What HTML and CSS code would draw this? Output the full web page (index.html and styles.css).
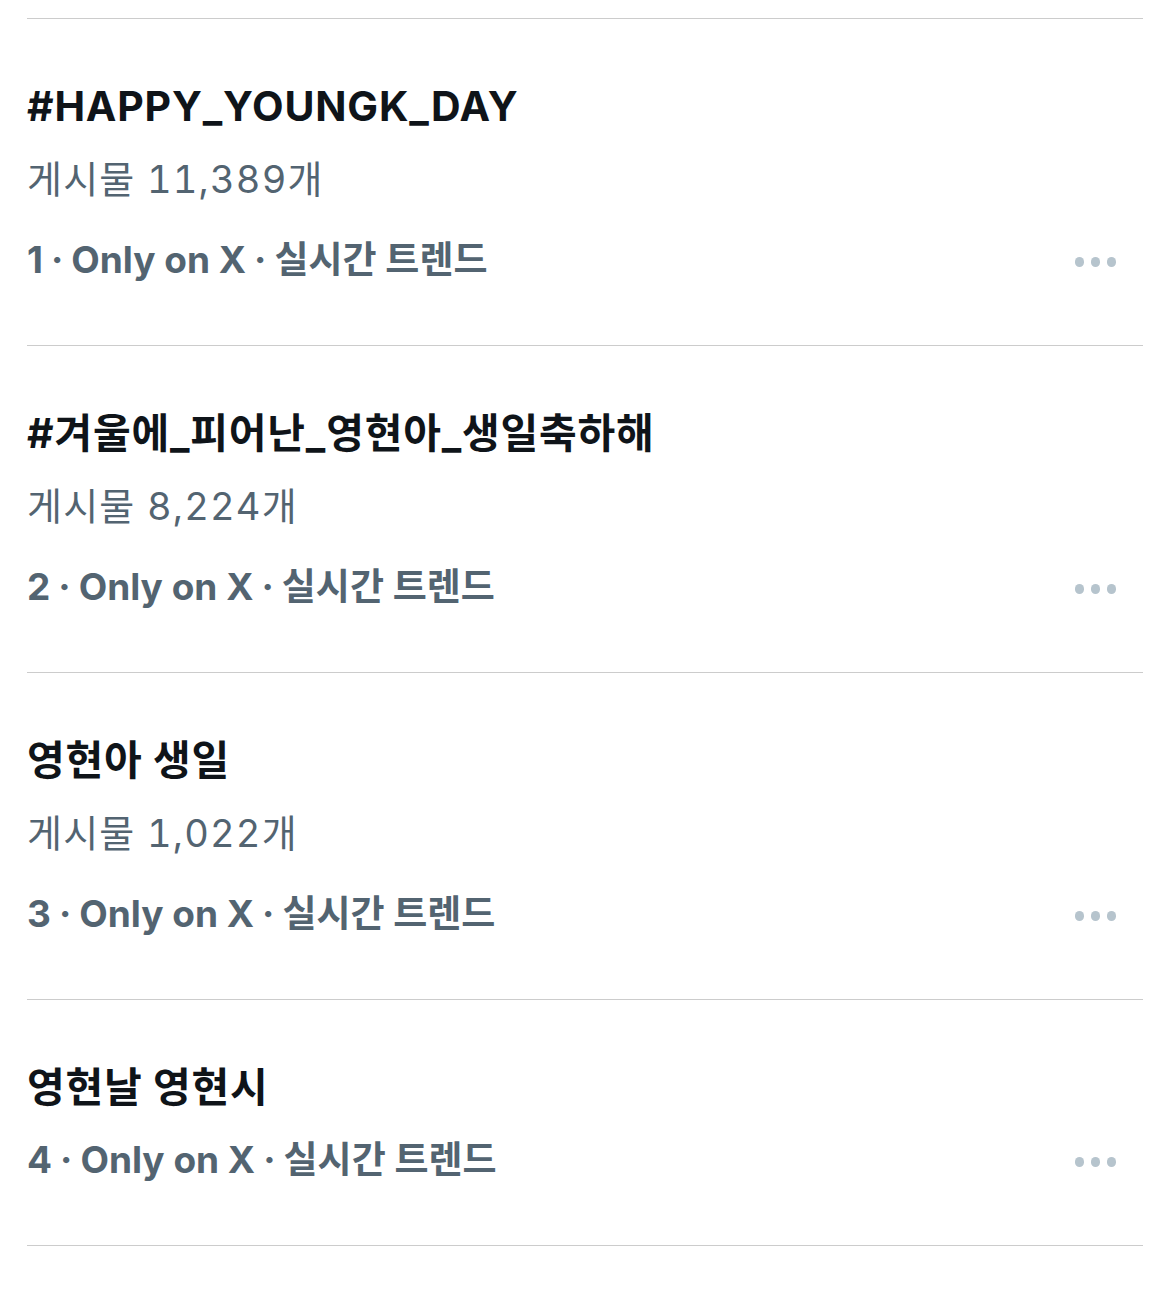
FILE: index.html
```html
<!DOCTYPE html>
<html lang="ko">
<head>
<meta charset="utf-8">
<link rel="stylesheet" href="styles.css">
</head>
<body>
<div class="list">
  <div class="trend">
    <div class="info">
      <div class="title">#HAPPY_YOUNGK_DAY</div>
      <div class="count">게시물 11,389개</div>
      <div class="meta">1<span class="sep">·</span>Only on X<span class="sep">·</span>실시간 트렌드</div>
    </div>
    <div class="more"><span></span><span></span><span></span></div>
  </div>
  <div class="trend">
    <div class="info">
      <div class="title">#겨울에_피어난_영현아_생일축하해</div>
      <div class="count">게시물 8,224개</div>
      <div class="meta">2<span class="sep">·</span>Only on X<span class="sep">·</span>실시간 트렌드</div>
    </div>
    <div class="more"><span></span><span></span><span></span></div>
  </div>
  <div class="trend">
    <div class="info">
      <div class="title">영현아 생일</div>
      <div class="count">게시물 1,022개</div>
      <div class="meta">3<span class="sep">·</span>Only on X<span class="sep">·</span>실시간 트렌드</div>
    </div>
    <div class="more"><span></span><span></span><span></span></div>
  </div>
  <div class="trend">
    <div class="info">
      <div class="title">영현날 영현시</div>
      <div class="meta">4<span class="sep">·</span>Only on X<span class="sep">·</span>실시간 트렌드</div>
    </div>
    <div class="more"><span></span><span></span><span></span></div>
  </div>
</div>
</body>
</html>
```

FILE: styles.css
```css
html, body {
  margin: 0;
  padding: 0;
  background: #ffffff;
}
body {
  font-family: Inter, "Noto Sans CJK KR", sans-serif;
}
.list {
  margin: 18px 27px 0 27px;
  border-top: 1px solid #cccccc;
}
.trend {
  display: flex;
  align-items: flex-end;
  justify-content: space-between;
  border-bottom: 1px solid #cccccc;
  padding: 55px 27px 46px 0;
}
.info {
  display: flex;
  flex-direction: column;
}
.title {
  font-size: 41px;
  line-height: 65px;
  font-weight: 700;
  color: #0f1419;
  letter-spacing: 0.8px;
}
.count {
  font-size: 38px;
  line-height: 81px;
  font-weight: 400;
  color: #536471;
  letter-spacing: 1.2px;
  font-variant-numeric: tabular-nums;
}
.meta {
  font-size: 37px;
  line-height: 79px;
  font-weight: 700;
  color: #536471;
}
.sep {
  padding: 0 8px;
}
.more {
  display: flex;
  gap: 6.5px;
  height: 79px;
  padding-top: 5px;
  box-sizing: border-box;
  align-items: center;
}
.more span {
  width: 9.5px;
  height: 9.5px;
  border-radius: 50%;
  background: #b6c4cd;
}
```
